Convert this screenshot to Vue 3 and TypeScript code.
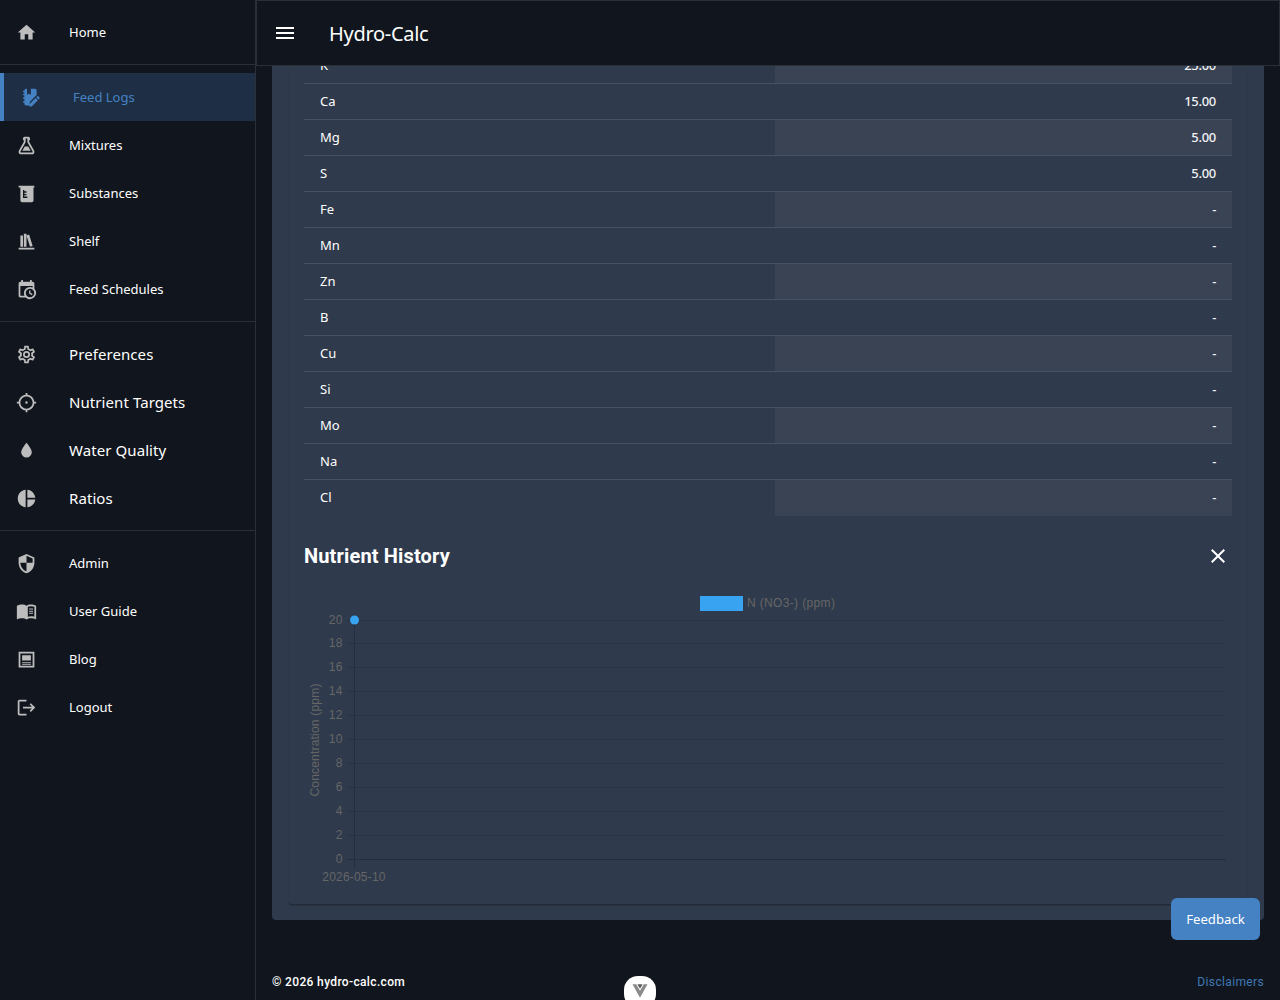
<script setup lang="ts">
interface NavItem { label: string; icon: string; large?: boolean; active?: boolean }

const home = 'M10,20V14H14V20H19V12H22L12,3L2,12H5V20H10Z'
const groupOne: NavItem[] = [
  { label: 'Feed Logs', active: true, icon: 'M7 2h10a2 2 0 0 1 2 2v5.2l-7.6 7.6L10.6 21H7a2 2 0 0 1-2-2v-1H3.5v-1.6H5v-2.7H3.5v-1.6H5V9.4H3.5V7.8H5V6H3.5V4.4H5V4a2 2 0 0 1 2-2M8 2v7l2.2-1.5L12.4 9V2M20.8 10.6l1.6 1.6c.3.3.3.7 0 1l-1.2 1.2-2.6-2.6 1.2-1.2c.3-.3.7-.3 1 0M17.8 12.6l2.6 2.6-7 7h-2.6v-2.6z' },
  { label: 'Mixtures', icon: 'M5,19A1,1 0 0,0 6,20H18A1,1 0 0,0 19,19C19,18.79 18.93,18.59 18.82,18.43L13,8.35V4H11V8.35L5.18,18.43C5.07,18.59 5,18.79 5,19M6,22A3,3 0 0,1 3,19C3,18.4 3.18,17.84 3.5,17.37L9,7.81V6A1,1 0 0,1 8,5V4A2,2 0 0,1 10,2H14A2,2 0 0,1 16,4V5A1,1 0 0,1 15,6V7.81L20.5,17.37C20.82,17.84 21,18.4 21,19A3,3 0 0,1 18,22H6M7.2,18L10,13.2H14L16.8,18Z' },
  { label: 'Substances', icon: 'M3 3h18v2h-1v15a2 2 0 0 1-2 2H7a2 2 0 0 1-2-2V5H3zM8 8v9h5v-1.500h-3.500V14H12v-1.500H9.500V11H12V9.500H9.500V8z' },
  { label: 'Shelf', icon: 'M9 3V18H12V3H9M12 5L16 18L19 17L15 4L12 5M5 5V18H8V5H5M3 19V21H21V19H3Z' },
  { label: 'Feed Schedules', icon: 'M15,13H16.5V15.82L18.94,17.23L18.19,18.53L15,16.69V13M19,8H5V19H9.67C9.24,18.09 9,17.07 9,16A7,7 0 0,1 16,9C17.07,9 18.09,9.24 19,9.67V8M5,21C3.89,21 3,20.1 3,19V5C3,3.89 3.89,3 5,3H6V1H8V3H16V1H18V3H19A2,2 0 0,1 21,5V11.1C22.24,12.36 23,14.09 23,16A7,7 0 0,1 16,23C14.09,23 12.36,22.24 11.1,21H5M16,11.15A4.85,4.85 0 0,0 11.15,16C11.15,18.68 13.32,20.85 16,20.85A4.85,4.85 0 0,0 20.85,16C20.85,13.32 18.68,11.15 16,11.15Z' }
]
const groupTwo: NavItem[] = [
  { label: 'Preferences', large: true, icon: 'M12,8A4,4 0 0,1 16,12A4,4 0 0,1 12,16A4,4 0 0,1 8,12A4,4 0 0,1 12,8M12,10A2,2 0 0,0 10,12A2,2 0 0,0 12,14A2,2 0 0,0 14,12A2,2 0 0,0 12,10M10,22C9.75,22 9.54,21.82 9.5,21.58L9.13,18.93C8.5,18.68 7.96,18.34 7.44,17.94L4.95,18.95C4.73,19.03 4.46,18.95 4.34,18.73L2.34,15.27C2.21,15.05 2.27,14.78 2.46,14.63L4.57,12.97L4.5,12L4.57,11L2.46,9.37C2.27,9.22 2.21,8.95 2.34,8.73L4.34,5.27C4.46,5.05 4.73,4.96 4.95,5.05L7.44,6.05C7.96,5.66 8.5,5.32 9.13,5.07L9.5,2.42C9.54,2.18 9.75,2 10,2H14C14.25,2 14.46,2.18 14.5,2.42L14.87,5.07C15.5,5.32 16.04,5.66 16.56,6.05L19.05,5.05C19.27,4.96 19.54,5.05 19.66,5.27L21.66,8.73C21.79,8.95 21.73,9.22 21.54,9.37L19.43,11L19.5,12L19.43,13L21.54,14.63C21.73,14.78 21.79,15.05 21.66,15.27L19.66,18.73C19.54,18.95 19.27,19.04 19.05,18.95L16.56,17.95C16.04,18.34 15.5,18.68 14.87,18.93L14.5,21.58C14.46,21.82 14.25,22 14,22H10M11.25,4L10.88,6.61C9.68,6.86 8.62,7.5 7.85,8.39L5.44,7.35L4.69,8.65L6.8,10.2C6.4,11.37 6.4,12.64 6.8,13.8L4.68,15.36L5.43,16.66L7.86,15.62C8.63,16.5 9.68,17.14 10.87,17.38L11.24,20H12.76L13.13,17.39C14.32,17.14 15.37,16.5 16.14,15.62L18.57,16.66L19.32,15.36L17.2,13.81C17.6,12.64 17.6,11.37 17.2,10.2L19.31,8.65L18.56,7.35L16.15,8.39C15.38,7.5 14.32,6.86 13.12,6.62L12.75,4H11.25Z' },
  { label: 'Nutrient Targets', large: true, icon: 'M3.05 13H1V11H3.05C3.5 6.83 6.83 3.5 11 3.05V1H13V3.05C17.17 3.5 20.5 6.83 20.95 11H23V13H20.95C20.5 17.17 17.17 20.5 13 20.95V23H11V20.95C6.83 20.5 3.5 17.17 3.05 13M12 5C8.13 5 5 8.13 5 12S8.13 19 12 19 19 15.87 19 12 15.87 5 12 5M12 10.6A1.4 1.4 0 1 1 12 13.4 1.4 1.4 0 1 1 12 10.6Z' },
  { label: 'Water Quality', large: true, icon: 'M12,20A6,6 0 0,1 6,14C6,10 12,3.25 12,3.25C12,3.25 18,10 18,14A6,6 0 0,1 12,20Z' },
  { label: 'Ratios', large: true, icon: 'M11,2V22C5.9,21.5 2,17.2 2,12C2,6.8 5.9,2.5 11,2M13,2V11H22C21.5,6.2 17.8,2.5 13,2M13,13V22C17.7,21.5 21.5,17.8 22,13H13Z' }
]
const groupThree: NavItem[] = [
  { label: 'Admin', icon: 'M12,1L3,5V11C3,16.55 6.84,21.74 12,23C17.16,21.74 21,16.55 21,11V5L12,1M12,3.18L19,6.3V11H12V21C8.25,20 5,15.54 5,11.22V11H12V3.18Z' },
  { label: 'User Guide', icon: 'M1 5.5C3 4.3 5 4 7 4c2 0 3.6.4 5 1.5C13.4 4.4 15 4 17 4c2 0 4 .3 6 1.5V21c-2-1-4-1.3-6-1.3s-3.6.4-5 1.3c-1.4-.9-3-1.3-5-1.3S3 20 1 21zM13.5 6.5v11.6c1.2-.5 2.3-.7 3.5-.7 1.2 0 2.4.1 4 .6V6.600C19.700 6.100 18.300 5.900 17 5.900c-1.300 0-2.400.2-3.500.6M15 8.500h4.500v1.200H15zM15 11h4.500v1.200H15zM15 13.500h4.500v1.200H15z' },
  { label: 'Blog', icon: 'M3 3h18v18H3zM5 5v14h14V5zM7 7h10v6H7zM7 15h10v1.300H7zM7 17h10v1H7z' },
  { label: 'Logout', icon: 'M17 7L15.59 8.41L18.17 11H8V13H18.17L15.59 15.58L17 17L22 12M4 5H12V3H4C2.9 3 2 3.9 2 5V19C2 20.1 2.9 21 4 21H12V19H4V5Z' }
]

const rows: [string, string][] = [
  ['K', '25.00'], ['Ca', '15.00'], ['Mg', '5.00'], ['S', '5.00'], ['Fe', '-'], ['Mn', '-'], ['Zn', '-'],
  ['B', '-'], ['Cu', '-'], ['Si', '-'], ['Mo', '-'], ['Na', '-'], ['Cl', '-']
]

const ticks = Array.from({ length: 11 }, (_, i) => ({ value: 20 - i * 2, y: i === 0 ? 30.5 : 29.5 + i * 24 }))
</script>

<template>
  <div class="shell">
    <aside class="sidebar">
      <nav class="group first">
        <a class="item"><svg class="icon" viewBox="0 0 24 24"><path :d="home" /></svg><span>Home</span></a>
      </nav>
      <nav class="group second">
        <a v-for="n in groupOne" :key="n.label" class="item" :class="{ active: n.active }">
          <svg class="icon" viewBox="0 0 24 24"><path :d="n.icon" fill-rule="evenodd" /></svg><span>{{ n.label }}</span>
        </a>
      </nav>
      <nav class="group third">
        <a v-for="n in groupTwo" :key="n.label" class="item large">
          <svg class="icon" viewBox="0 0 24 24"><path :d="n.icon" /></svg><span>{{ n.label }}</span>
        </a>
      </nav>
      <nav class="group fourth">
        <a v-for="n in groupThree" :key="n.label" class="item">
          <svg class="icon" viewBox="0 0 24 24"><path :d="n.icon" fill-rule="evenodd" /></svg><span>{{ n.label }}</span>
        </a>
      </nav>
    </aside>

    <main class="main">
      <header class="topbar">
        <svg class="burger" viewBox="0 0 24 24"><path d="M3,6H21V8H3V6M3,11H21V13H3V11M3,16H21V18H3V16Z" /></svg>
        <span class="title">Hydro-Calc</span>
      </header>

      <section class="outer">
        <div class="inner">
          <div class="table">
            <div v-for="r in rows" :key="r[0]" class="row">
              <div class="cell name">{{ r[0] }}</div>
              <div class="cell val">{{ r[1] }}</div>
            </div>
          </div>
          <div class="history-head">
            <h2>Nutrient History</h2>
            <svg class="close" viewBox="0 0 24 24"><path d="M19,6.41L17.59,5L12,10.59L6.41,5L5,6.41L10.59,12L5,17.59L6.41,19L12,13.41L17.59,19L19,17.59L13.41,12L19,6.41Z" /></svg>
          </div>
          <svg class="chart" viewBox="0 0 928 300" width="928" height="300">
            <rect x="396" y="6" width="43" height="15" fill="#38a3f1" />
            <text x="443" y="17" class="c-text legend" font-size="12">N (NO3-) (ppm)</text>
            <g v-for="t in ticks" :key="t.value">
              <line x1="43" x2="922" :y1="t.y" :y2="t.y" :class="t.value === 0 ? 'axis' : 'grid'" />
              <text x="39" :y="t.y + 3.200" text-anchor="end" class="c-text tick" font-size="12">{{ t.value }}</text>
            </g>
            <line x1="50.500" x2="50.500" y1="30" y2="278" class="axis" />
            <text x="50" y="291" text-anchor="middle" class="c-text" font-size="12">2026-05-10</text>
            <text transform="translate(15 150) rotate(-90)" text-anchor="middle" class="c-text" font-size="12">Concentration (ppm)</text>
            <circle cx="50.500" cy="30" r="4.500" fill="#38a3f1" />
          </svg>
        </div>
      </section>

      <footer class="footer">
        <span class="copy">© 2026 hydro-calc.com</span>
        <a class="disc">Disclaimers</a>
      </footer>
    </main>

    <button class="feedback">Feedback</button>
    <div class="devtools">
      <svg viewBox="0 0 24 24" width="18" height="18"><path d="M2 3h5l5 8.500L17 3h5L12 21z" fill="#8a8a8a" /><path d="M8.500 3h7L12 9z" fill="#5a5a5a" /></svg>
    </div>
  </div>
</template>

<style>
html, body { margin: 0; background: #11161e; overflow: hidden; }
</style>

<style scoped>
.shell { display: flex; width: 1280px; height: 1000px; position: relative; overflow: hidden; background: #11161e; font-family: "Noto Sans", "Open Sans", sans-serif; color: #fff; }
.sidebar { width: 256px; flex: none; box-sizing: border-box; border-right: 1px solid #2a2f38; display: flex; flex-direction: column; }
.group { display: flex; flex-direction: column; border-bottom: 1px solid #2a2f38; padding: 8px 0; }
.group.fourth { border-bottom: 0; }
.item { height: 48px; display: flex; align-items: center; padding-left: 16px; box-sizing: border-box; font-size: 13px; color: #fff; }
.item.large { font-size: 15px; letter-spacing: 0.08px; }
.item .icon { width: 21px; height: 21px; fill: #bdbdbd; margin-right: 32px; flex: none; }
.item.active { background: #1e2f45; border-left: 4px solid #4482c3; color: #4482c3; }
.item.active .icon { fill: #4482c3; }
.main { flex: 1; min-width: 0; position: relative; display: flex; flex-direction: column; padding: 48px 16px 0; box-sizing: border-box; }
.topbar { position: absolute; z-index: 2; top: 0; left: 0; right: 0; height: 66px; box-sizing: border-box; border: 1px solid #2a2f38; background: #11161e; display: flex; align-items: center; padding-left: 16px; }
.burger { width: 24px; height: 24px; fill: #fff; margin-right: 32px; }
.title { font-size: 20px; letter-spacing: -0.3px; }
.outer { background: #2f3a4c; border-radius: 0 0 4px 4px; padding: 0 16px 15px; }
.inner { border-left: 1px solid #2d3849; border-right: 1px solid #2d3849; border-bottom: 1px solid #222a37; border-radius: 0 0 4px 4px; padding: 0 15px; height: 857px; box-sizing: border-box; box-shadow: 0 1px 1px rgba(0, 0, 0, 0.15); }
.row { display: flex; height: 36px; box-sizing: border-box; border-bottom: 1px solid #475162; font-size: 13px; }
.row:last-child { border-bottom: 0; }
.cell { display: flex; align-items: center; padding: 0 16px 2px; box-sizing: border-box; }
.name { width: 471px; }
.val { flex: 1; justify-content: flex-end; font-weight: 500; color: #f1f2f4; letter-spacing: -0.3px; }
.row:nth-child(odd) .val { background: #3a4354; }
.history-head { height: 74px; padding: 6px 2px 0 0; box-sizing: border-box; display: flex; align-items: center; justify-content: space-between; }
h2 { margin: 0; font: 700 20px Roboto, sans-serif; letter-spacing: 0.15px; color: #fff; }
.close { width: 24px; height: 24px; fill: #fff; }
.chart { display: block; }
.c-text { font-family: "Liberation Sans", Arial, sans-serif; fill: #666; letter-spacing: 0.2px; }
.legend { letter-spacing: 0.35px; }
.tick { letter-spacing: 0.5px; }
.grid { stroke: #2a3444; stroke-width: 1; }
.axis { stroke: #252e3e; stroke-width: 1; }
.footer { display: flex; justify-content: space-between; align-items: center; margin-top: 55px; font: 500 12px Roboto, sans-serif; letter-spacing: 0.35px; }
.disc { color: #3f78b6; font-weight: 400; }
.feedback { position: absolute; left: 1171px; top: 898px; width: 89px; height: 42px; border: 0; border-radius: 6px; background: #4482c3; color: #fff; font: 400 13.2px "Noto Sans", sans-serif; }
.devtools { position: absolute; left: 624px; top: 976px; width: 32px; height: 32px; border-radius: 14px; background: #fff; display: flex; justify-content: center; padding-top: 6px; box-sizing: border-box; }
</style>
